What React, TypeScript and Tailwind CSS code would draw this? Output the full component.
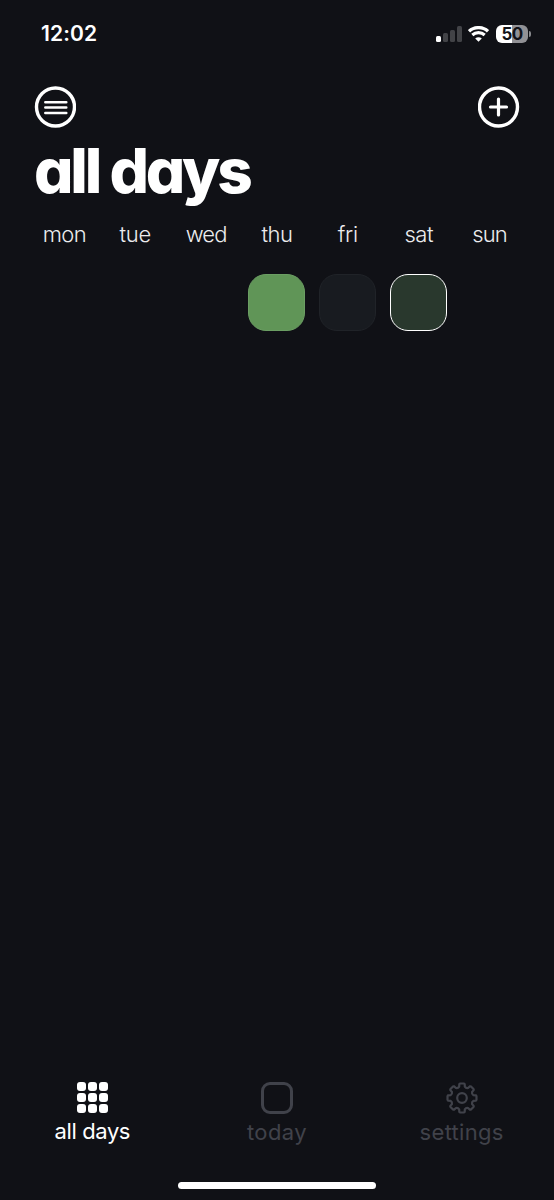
const days = [
  { name: "mon", label: "tracking-[-0.6px]", cell: "" },
  { name: "tue", label: "tracking-[-0.3px]", cell: "" },
  { name: "wed", label: "tracking-[-0.9px]", cell: "" },
  { name: "thu", label: "tracking-[-0.5px]", cell: "bg-[#609557] border-[#6b9e63]" },
  { name: "fri", label: "tracking-[-0.2px]", cell: "bg-[#181b20] border-[#202328]" },
  { name: "sat", label: "tracking-[-0.5px]", cell: "bg-[#29382d] border-white" },
  { name: "sun", label: "tracking-[-0.9px]", cell: "" },
];

// one tooth, repeated every 45 degrees
function gearPath() {
  const point = (r: number, deg: number) => {
    const a = ((deg - 90) * Math.PI) / 180;
    return `${(16 + r * Math.cos(a)).toFixed(2)} ${(16 + r * Math.sin(a)).toFixed(2)}`;
  };
  let d = "";
  for (let i = 0; i < 8; i++) {
    const a = i * 45;
    d += `${i === 0 ? "M" : "L"}${point(11.7, a - 14)} L${point(14.1, a - 11)} Q${point(14.5, a - 10)} ${point(14.6, a - 7)} L${point(14.6, a + 7)} Q${point(14.5, a + 10)} ${point(14.1, a + 11)} L${point(11.7, a + 14)} Q${point(10.4, a + 22.5)} ${point(11.7, a + 31)} `;
  }
  return d + "Z";
}

function StatusBar() {
  return (
    <div className="flex h-[67px] items-center justify-between pl-[41px] pr-[23px]">
      <span className="text-[21px] font-semibold leading-6 tracking-[0.1px]">12:02</span>
      <div className="flex items-center">
        <div className="flex h-[16px] items-end gap-[2px]">
          <i className="h-[6px] w-[5px] rounded-[1.5px] bg-white" />
          <i className="h-[9px] w-[5px] rounded-[1.5px] bg-[#424347]" />
          <i className="h-[12px] w-[5px] rounded-[1.5px] bg-[#424347]" />
          <i className="h-[16px] w-[5px] rounded-[1.5px] bg-[#424347]" />
        </div>
        <svg className="ml-[6px] h-[16px] w-[21px]" viewBox="0 0 21 16" fill="none" stroke="white">
          <path d="M1 5.3C6.2.4 14.8.4 20 5.3" strokeWidth="3.3" />
          <path d="M4.3 9c3.5-3.2 8.9-3.2 12.4 0" strokeWidth="3.1" />
          <path d="M7.2 12.4c1.9-1.7 4.7-1.7 6.6 0L10.5 15.8Z" fill="white" stroke="none" />
        </svg>
        <div className="ml-[7px] flex h-[18px] w-[32px] items-center justify-center rounded-[6px] bg-linear-to-r from-white from-50% to-[#919195] to-50% pt-px text-[17px] font-bold leading-none tracking-[-0.6px] text-[#111217]">
          50
        </div>
        <i className="ml-px h-[6px] w-[2px] rounded-r-full bg-[#88898d]" />
      </div>
    </div>
  );
}

export default function App() {
  return (
    <div className="flex h-[1200px] w-[554px] flex-col bg-[#101116] font-['Inter',sans-serif] text-white">
      <StatusBar />
      <div className="mt-[19px] flex justify-between px-[34px]">
        <svg className="size-[42px]" viewBox="0 0 42 42" fill="none" stroke="white" strokeLinecap="round">
          <circle cx="21.5" cy="21" r="19" strokeWidth="3.4" />
          <path d="M11.3 16.3h21M11.3 21.6h21M11.3 27h21" strokeWidth="2.5" />
        </svg>
        <svg className="size-[42px]" viewBox="0 0 42 42" fill="none" stroke="white" strokeLinecap="round">
          <circle cx="20.5" cy="21" r="19" strokeWidth="3.4" />
          <path d="M12.5 21h16M20.5 13v16" strokeWidth="3.2" />
        </svg>
      </div>
      <h1 className="mt-[5px] pl-[34px] text-[62px] font-extrabold leading-[76px] tracking-[-3.2px] whitespace-nowrap [font-feature-settings:'cv11']">
        all days
      </h1>

      <div className="mt-[10px] grid grid-cols-7 px-[29px]">
        {days.map((day) => (
          <div key={day.name} className="flex flex-col items-center">
            <span className={`text-[22px] font-[340] leading-[30px] text-[#ececee] ${day.label}`}>{day.name}</span>
            {day.cell && <div className={`mt-[25px] size-[57px] rounded-[18px] border-[1.5px] ${day.cell}`} />}
          </div>
        ))}
      </div>

      <nav className="mt-auto grid h-[118px] grid-cols-3 text-[22px] leading-[28px]">
        <div className="flex flex-col items-center">
          <div className="grid size-[31px] grid-cols-3 gap-[2px]">
            {Array.from({ length: 9 }, (_, i) => (
              <i key={i} className="rounded-[3px] bg-white" />
            ))}
          </div>
          <span className="mt-[4px] tracking-[-0.4px]">all days</span>
        </div>
        <div className="flex flex-col items-center text-[#40424a]">
          <div className="size-[32px] rounded-[9px] border-[3px] border-current" />
          <span className="mt-[4px] tracking-[0.4px]">today</span>
        </div>
        <div className="flex flex-col items-center text-[#40424a]">
          <svg className="size-[32px]" viewBox="0 0 32 32" fill="none" stroke="currentColor" strokeWidth="2.2" strokeLinejoin="round">
            <path d={gearPath()} />
            <circle cx="16" cy="16" r="4.8" />
          </svg>
          <span className="mt-[4px] tracking-[0.3px]">settings</span>
        </div>
      </nav>
      <div className="mb-[11px] h-[7px] w-[198px] shrink-0 self-center rounded-full bg-white -mt-[18px]" />
    </div>
  );
}
